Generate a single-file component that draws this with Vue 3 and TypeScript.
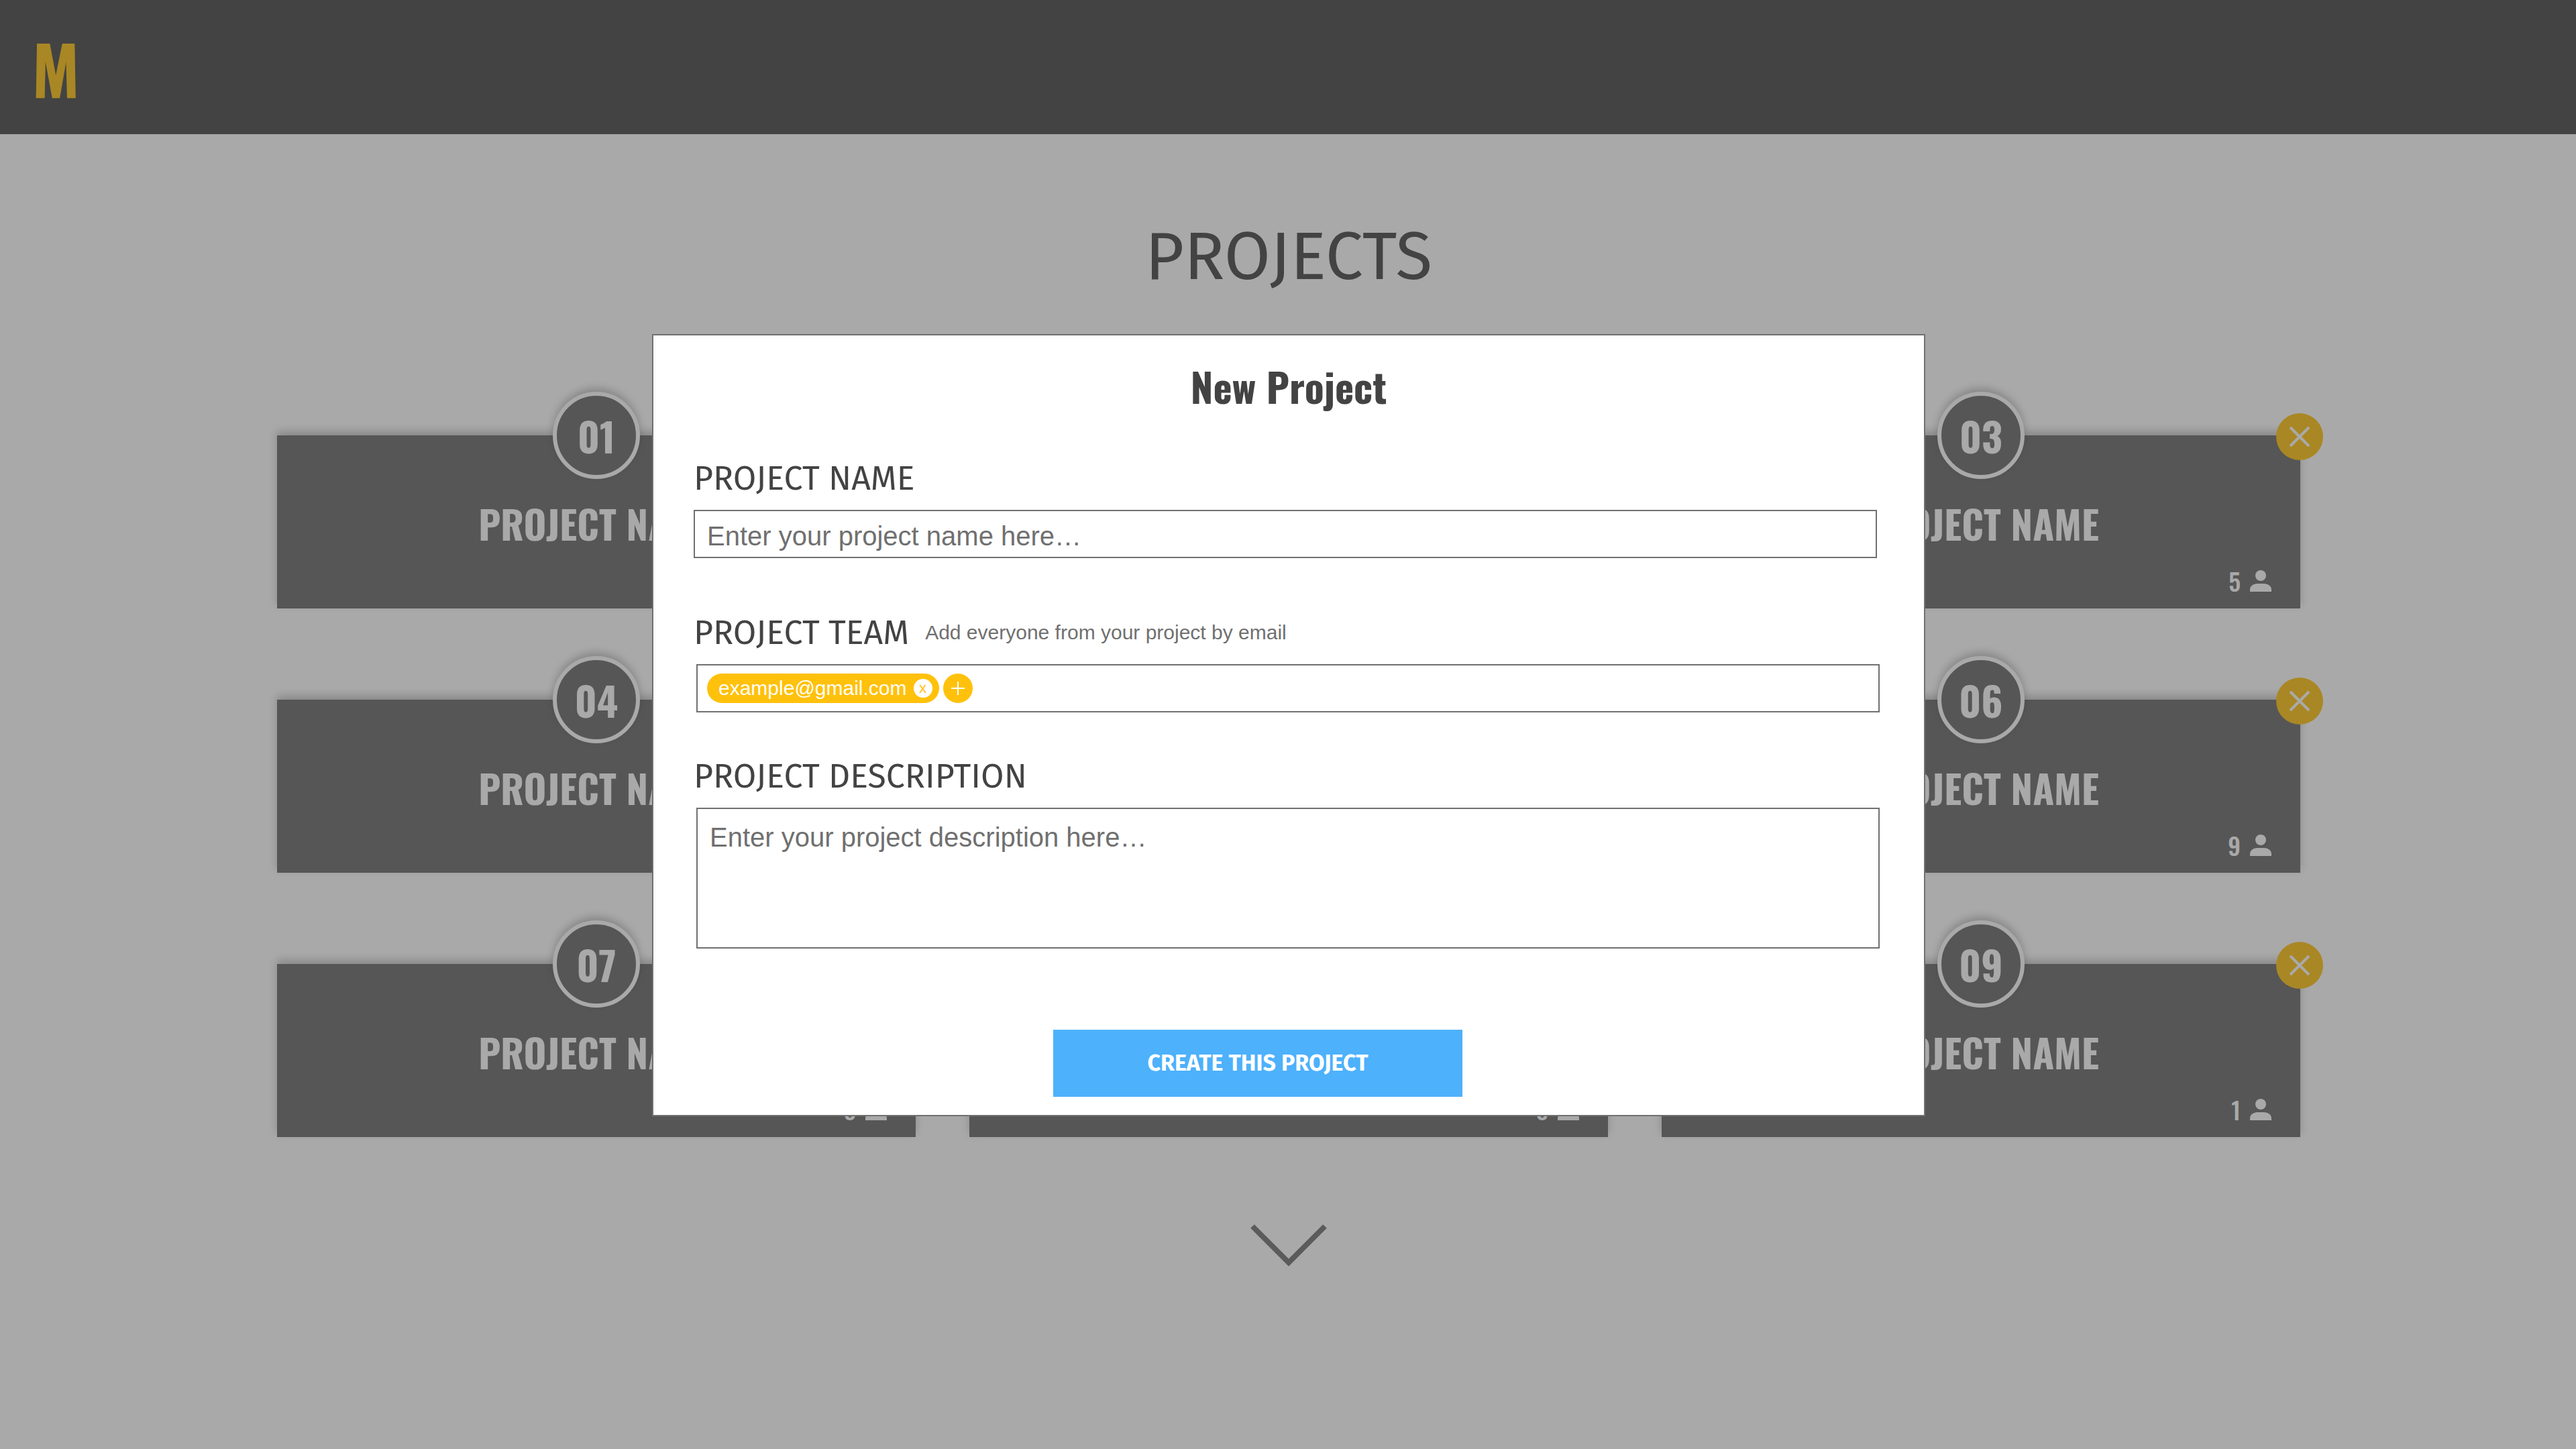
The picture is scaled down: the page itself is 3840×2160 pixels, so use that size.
<script setup lang="ts">
import { ref } from 'vue'

interface Project {
  id: string
  name: string
  members: number
}

const projects = ref<Project[]>([
  { id: '01', name: 'PROJECT NAME', members: 3 },
  { id: '02', name: 'PROJECT NAME', members: 4 },
  { id: '03', name: 'PROJECT NAME', members: 5 },
  { id: '04', name: 'PROJECT NAME', members: 7 },
  { id: '05', name: 'PROJECT NAME', members: 2 },
  { id: '06', name: 'PROJECT NAME', members: 9 },
  { id: '07', name: 'PROJECT NAME', members: 8 },
  { id: '08', name: 'PROJECT NAME', members: 8 },
  { id: '09', name: 'PROJECT NAME', members: 1 },
])

const projectName = ref('')
const description = ref('')
const newEmail = ref('')
const emails = ref<string[]>(['example@gmail.com'])

function removeProject(id: string) {
  projects.value = projects.value.filter((p) => p.id !== id)
}

function removeEmail(email: string) {
  emails.value = emails.value.filter((e) => e !== email)
}

function addEmail() {
  const email = newEmail.value.trim()
  if (email && !emails.value.includes(email)) emails.value.push(email)
  newEmail.value = ''
}
</script>

<template>
  <div class="page">
    <header class="topbar">
      <a class="logo" href="#">M</a>
    </header>

    <main class="content">
      <h1 class="page-title">PROJECTS</h1>
      <ul class="grid">
        <li v-for="project in projects" :key="project.id" class="card">
          <span class="badge">{{ project.id }}</span>
          <button class="remove" type="button" :aria-label="`Delete project ${project.id}`" @click="removeProject(project.id)">
            <svg viewBox="0 0 32 32" width="32" height="32" aria-hidden="true">
              <path d="M2 2 30 30M30 2 2 30" fill="none" stroke="currentColor" stroke-width="4" />
            </svg>
          </button>
          <h2 class="card-name">{{ project.name }}</h2>
          <p class="members">
            {{ project.members }}
            <svg viewBox="4 4 16 16" width="32" height="32" aria-hidden="true">
              <circle cx="12" cy="8" r="4" fill="currentColor" />
              <path d="M4 20v-1.500c0-2.700 2.600-4.500 5.500-4.500h5c2.900 0 5.500 1.800 5.500 4.500v1.500z" fill="currentColor" />
            </svg>
          </p>
        </li>
      </ul>
      <button class="more" type="button" aria-label="Show more projects">
        <svg viewBox="0 0 114 64" width="114" height="64" aria-hidden="true">
          <path d="M3 3 57 57 111 3" fill="none" stroke="currentColor" stroke-width="8" />
        </svg>
      </button>
    </main>

    <div class="backdrop">
      <section class="modal" role="dialog" aria-modal="true" aria-labelledby="modal-title">
        <h2 id="modal-title" class="modal-title">New Project</h2>
        <form class="form" @submit.prevent>
          <div class="field">
            <label class="label" for="project-name">PROJECT NAME</label>
            <input id="project-name" v-model="projectName" class="box name-box" type="text" placeholder="Enter your project name here…" />
          </div>

          <div class="field team">
            <div class="label-row">
              <label class="label" for="project-team">PROJECT TEAM</label>
              <span id="team-hint" class="hint">Add everyone from your project by email</span>
            </div>
            <div class="box team-box">
              <span v-for="email in emails" :key="email" class="chip">
                {{ email }}
                <button class="chip-remove" type="button" :aria-label="`Remove ${email}`" @click="removeEmail(email)">x</button>
              </span>
              <button class="chip-add" type="button" aria-label="Add email" @click="addEmail">
                <svg viewBox="0 0 20 20" width="20" height="20" aria-hidden="true">
                  <path d="M10 0V20M0 10H20" fill="none" stroke="currentColor" stroke-width="2" />
                </svg>
              </button>
              <input id="project-team" v-model="newEmail" class="team-input" type="email" aria-describedby="team-hint" />
            </div>
          </div>

          <div class="field about">
            <label class="label" for="project-description">PROJECT DESCRIPTION</label>
            <textarea id="project-description" v-model="description" class="box about-box" placeholder="Enter your project description here…"></textarea>
          </div>

          <button class="submit" type="submit">CREATE THIS PROJECT</button>
        </form>
      </section>
    </div>
  </div>
</template>

<style>
body {
  margin: 0;
  background: #fff;
}
</style>

<style scoped>
.page {
  --display: Oswald, "Liberation Sans Narrow", "Arial Narrow", sans-serif;
  --heading: "Fira Sans", "Noto Sans", sans-serif;
  --body: "Liberation Sans", Arial, sans-serif;
  --dark: #434343;
  --line: #707070;
  --gold: #ffc10b;
  min-height: 100vh;
  color: var(--dark);
  background: #fff;
}

.page *,
.page *::before {
  box-sizing: border-box;
}

button {
  padding: 0;
  border: 0;
  cursor: pointer;
}

svg {
  display: block;
}

.topbar {
  display: flex;
  align-items: center;
  height: 200px;
  padding: 2px 48px 0;
  background: var(--dark);
}

.logo {
  font: 700 100px/120px var(--display);
  color: var(--gold);
  text-decoration: none;
}

.content {
  display: flex;
  flex-direction: column;
  align-items: center;
  padding: 123px 48px 0 50px;
}

.page-title {
  margin: 0;
  font: 400 100px/120px var(--heading);
}

.grid {
  display: grid;
  grid-template-columns: repeat(3, 1fr);
  gap: 136px 80px;
  width: 100%;
  max-width: 3016px;
  margin: 206px 0 0;
  padding: 0;
  list-style: none;
}

.card {
  position: relative;
  display: flex;
  flex-direction: column;
  height: 258px;
  padding: 95px 43px 17px;
  color: #fff;
  background: #666;
  box-shadow: 0 -6px 12px rgba(0, 0, 0, 0.24);
}

.badge {
  position: absolute;
  top: -65px;
  left: calc(50% - 65px);
  width: 130px;
  height: 130px;
  border: 6px solid #fff;
  border-radius: 50%;
  background: #666;
  box-shadow: 0 -6px 12px rgba(0, 0, 0, 0.24);
  font: 700 60px/118px var(--display);
  text-align: center;
}

.remove {
  position: absolute;
  top: -33px;
  right: -34px;
  display: grid;
  place-items: center;
  width: 70px;
  height: 70px;
  border-radius: 50%;
  color: #fff;
  background: var(--gold);
}

.card-name {
  margin: 0;
  font: 700 58px/72px var(--display);
  text-align: center;
}

.members {
  display: flex;
  align-items: center;
  justify-content: flex-end;
  gap: 14px;
  margin: auto 0 0;
  font: 500 36px/48px var(--display);
}

.more {
  margin-top: 130px;
  color: var(--line);
  background: none;
}

.backdrop {
  position: fixed;
  inset: 0;
  display: flex;
  align-items: flex-start;
  justify-content: center;
  padding: 498px 48px 0 50px;
  background: rgba(67, 67, 67, 0.46);
}

.modal {
  width: 100%;
  max-width: 1898px;
  padding: 35px 66px 27px 60px;
  border: 2px solid var(--line);
  background: #fff;
}

.modal-title {
  margin: 0;
  padding-left: 6px;
  font: 700 60px/80px var(--display);
  text-align: center;
}

.form {
  display: flex;
  flex-direction: column;
  margin-top: 66px;
}

.field {
  display: flex;
  flex-direction: column;
  gap: 15px;
}

.team {
  margin-top: 79px;
}

.about {
  margin-top: 63px;
}

.label-row {
  display: flex;
  align-items: center;
  gap: 24px;
}

.label {
  font: 400 50px/64px var(--heading);
}

.hint {
  font: 400 30px/40px var(--body);
  color: var(--line);
}

.box {
  border: 2px solid var(--line);
  border-radius: 0;
  outline: 0;
  background: #fff;
  font: 400 40px/48px var(--body);
  color: var(--line);
}

.box::placeholder {
  color: var(--line);
  opacity: 1;
}

.name-box {
  height: 72px;
  margin-right: 4px;
  padding: 6px 18px 0;
}

.team-box {
  display: flex;
  align-items: center;
  gap: 6px;
  height: 72px;
  margin-left: 4px;
  padding: 0 14px;
}

.chip {
  display: flex;
  align-items: center;
  gap: 10px;
  height: 44px;
  padding: 0 10px 0 17px;
  border-radius: 22px;
  font-size: 30px;
  line-height: 44px;
  color: #fff;
  background: var(--gold);
}

.chip-remove {
  width: 28px;
  height: 28px;
  border-radius: 50%;
  font: 400 22px/24px var(--body);
  color: var(--gold);
  background: #fff;
}

.chip-add {
  display: grid;
  place-items: center;
  width: 44px;
  height: 44px;
  border-radius: 50%;
  color: #fff;
  background: var(--gold);
}

.team-input {
  flex: 1;
  min-width: 0;
  height: 44px;
  border: 0;
  outline: 0;
  background: none;
  font: 400 30px/44px var(--body);
  color: var(--line);
}

.about-box {
  height: 210px;
  margin-left: 4px;
  padding: 18px;
  resize: none;
}

.submit {
  align-self: center;
  width: 610px;
  height: 100px;
  margin: 121px 86px 0 0;
  font: 700 34px/44px var(--heading);
  color: #fff;
  background: #4db1fb;
}
</style>
